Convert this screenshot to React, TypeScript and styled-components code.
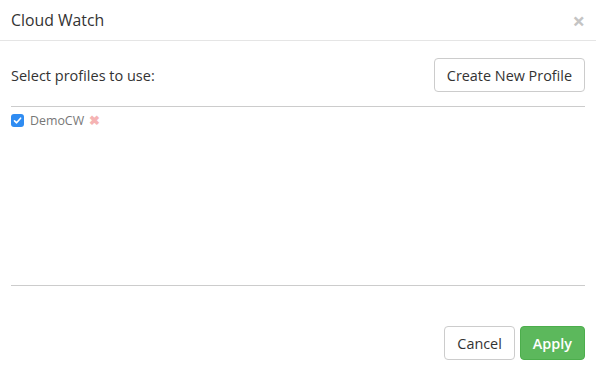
import React from "react";
import styled, { createGlobalStyle } from "styled-components";

const Global = createGlobalStyle`
  html, body { margin: 0; padding: 0; background: #fff; }
  body { font-family: "Open Sans", "Liberation Sans", sans-serif; color: #333; }
  * { box-sizing: border-box; }
`;

const Modal = styled.div`
  width: 596px;
  height: 373px;
  display: flex;
  flex-direction: column;
  background: #fff;
`;

const Header = styled.div`
  height: 41px;
  display: flex;
  align-items: center;
  justify-content: space-between;
  padding: 0 11px 1px 11px;
  border-bottom: 1px solid #e5e5e5;
`;

const Title = styled.h4`
  margin: 0;
  font-size: 15.8px;
  font-weight: 400;
  color: #333;
`;

const Close = styled.span`
  font-size: 22px;
  font-weight: 700;
  color: #c4c4c4;
  line-height: 1;
  margin-top: 0px;
`;

const Body = styled.div`
  flex: 1;
  display: flex;
  flex-direction: column;
  padding: 17px 11px 0 11px;
`;

const Toolbar = styled.div`
  display: flex;
  align-items: center;
  justify-content: space-between;
  padding-bottom: 14px;
  border-bottom: 1px solid #ccc;
`;

const Label = styled.span`
  font-size: 14.5px;
  color: #333;
`;

const Button = styled.button<{ $primary?: boolean }>`
  font-family: inherit;
  font-size: 14.4px;
  height: 34px;
  padding: 0 12px;
  border-radius: 4px;
  border: 1px solid ${(p) => (p.$primary ? "#4cae4c" : "#ccc")};
  background: ${(p) => (p.$primary ? "#5cb85c" : "#fff")};
  color: ${(p) => (p.$primary ? "#fff" : "#333")};
  font-weight: ${(p) => (p.$primary ? 600 : 400)};
  cursor: pointer;
`;

const List = styled.div`
  height: 179px;
  padding-top: 4px;
  border-bottom: 1px solid #ccc;
`;

const Item = styled.label`
  display: flex;
  align-items: center;
  gap: 6px;
  font-size: 12.4px;
  color: #777;
`;

const Check = styled.span`
  width: 13px;
  height: 13px;
  border-radius: 3px;
  background: #2f8cf2;
  display: flex;
  align-items: center;
  justify-content: center;
`;

const Remove = styled.span`
  color: #f5b3b3;
  font-size: 13px;
  font-weight: 700;
  margin-left: -1px;
`;

const Footer = styled.div`
  display: flex;
  justify-content: flex-end;
  gap: 5px;
  padding: 0 11px 13px 0;
`;

export default function App() {
  return (
    <>
      <Global />
      <Modal>
        <Header>
          <Title>Cloud Watch</Title>
          <Close>×</Close>
        </Header>
        <Body>
          <Toolbar>
            <Label>Select profiles to use:</Label>
            <Button>Create New Profile</Button>
          </Toolbar>
          <List>
            <Item>
              <Check>
                <svg width="9" height="9" viewBox="0 0 9 9">
                  <path d="M1.5 4.8 L3.6 6.8 L7.6 2.2" fill="none" stroke="#fff" strokeWidth="1.6" strokeLinecap="round" strokeLinejoin="round" />
                </svg>
              </Check>
              <span>DemoCW</span>
              <Remove>✖</Remove>
            </Item>
          </List>
        </Body>
        <Footer>
          <Button>Cancel</Button>
          <Button $primary>Apply</Button>
        </Footer>
      </Modal>
    </>
  );
}
